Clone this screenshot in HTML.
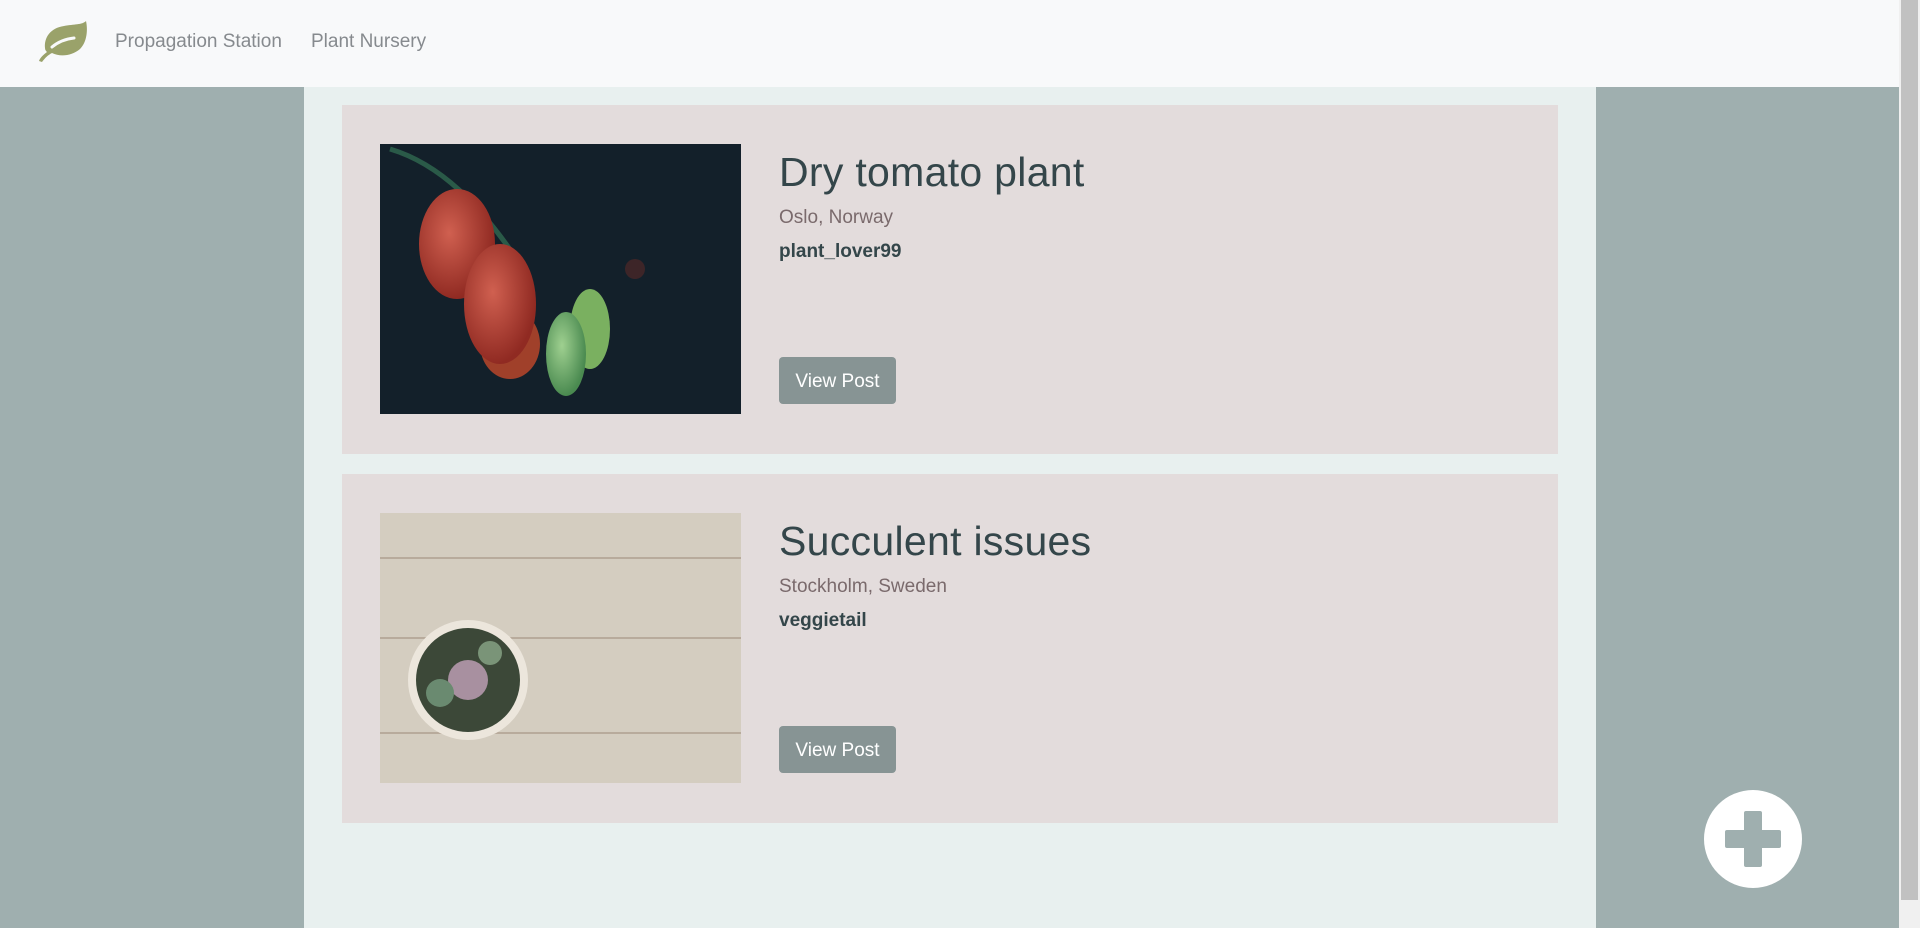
<!DOCTYPE html>
<html><head><style>
*{margin:0;padding:0;box-sizing:border-box}
body{width:1920px;height:928px;overflow:hidden;background:#9fafaf;font-family:"Liberation Sans",sans-serif;position:relative}
.nav{position:absolute;left:0;top:0;width:1899px;height:87px;background:#f8f9fa}
.nav a{position:absolute;top:31px;font-size:19px;color:#868a8e;text-decoration:none}
.main{position:absolute;left:304px;top:87px;width:1292px;height:841px;background:#e8f0ef}
.card{position:absolute;left:38px;width:1216px;height:349px;background:#e3dcdc}
.img{position:absolute;left:38px;top:39px;width:361px;height:270px;overflow:hidden}
.t{position:absolute;left:437px;top:44px;font-size:41px;color:#34464a;letter-spacing:.3px}
.loc{position:absolute;left:437px;top:102px;font-size:19px;color:#7a6a6c}
.u{position:absolute;left:437px;top:136px;font-size:19px;font-weight:bold;color:#34464a}
.btn{position:absolute;left:437px;top:252px;width:117px;height:47px;background:#879494;border-radius:4px;color:#fff;font-size:19px;text-align:center;line-height:49px}
.sb{position:absolute;left:1899px;top:0;width:21px;height:928px;background:#f0f0f0}
.sb div{position:absolute;left:2px;top:0;width:17px;height:900px;background:#c1c1c1}
</style></head><body>
<div class="nav">
<svg style="position:absolute;left:38px;top:20px" width="50" height="42" viewBox="0 0 50 42"><path d="M48 1C44 5 36 4 26 6 12 8 6 18 7 28c0 2 1 3 2 4C5 35 2 38 1 41l3 1c3-4 6-7 10-9 8 4 20 3 28-4C49 22 50 10 48 1z" fill="#9aa26a"/><path d="M14 27c6-5 13-8 22-9" stroke="#f8f9fa" stroke-width="3" fill="none" stroke-linecap="round"/></svg>
<a style="left:115px">Propagation Station</a><a style="left:311px">Plant Nursery</a>
</div>
<div class="main">
<div class="card" style="top:18px">
<div class="img"><svg width="361" height="270"><defs><radialGradient id="r1" cx=".4" cy=".4" r=".6"><stop offset="0" stop-color="#d06050"/><stop offset="1" stop-color="#902a22"/></radialGradient><radialGradient id="g1" cx=".4" cy=".4" r=".6"><stop offset="0" stop-color="#9fd090"/><stop offset="1" stop-color="#4a8a50"/></radialGradient></defs><rect width="361" height="270" fill="#13202a"/><path d="M10 5C60 20 100 60 140 120" stroke="#2a5a48" stroke-width="5" fill="none"/><ellipse cx="77" cy="100" rx="38" ry="55" fill="url(#r1)"/><ellipse cx="130" cy="200" rx="30" ry="35" fill="#a0402a"/><ellipse cx="120" cy="160" rx="36" ry="60" fill="url(#r1)"/><ellipse cx="210" cy="185" rx="20" ry="40" fill="#7ab060"/><ellipse cx="186" cy="210" rx="20" ry="42" fill="url(#g1)"/><circle cx="255" cy="125" r="10" fill="#5a2a28" opacity=".6"/></svg></div>
<div class="t">Dry tomato plant</div><div class="loc">Oslo, Norway</div><div class="u">plant_lover99</div><div class="btn">View Post</div>
</div>
<div class="card" style="top:387px">
<div class="img"><svg width="361" height="270"><rect width="361" height="270" fill="#d8d6ce"/><rect width="361" height="270" fill="#c9a88a" opacity=".2"/><path d="M0 45H361M0 125H361M0 220H361" stroke="#b8ab9c" stroke-width="2"/><circle cx="88" cy="167" r="60" fill="#ece6dc"/><circle cx="88" cy="167" r="52" fill="#3c4838"/><circle cx="88" cy="167" r="20" fill="#a890a0"/><circle cx="60" cy="180" r="14" fill="#6a8a70"/><circle cx="110" cy="140" r="12" fill="#7a9478"/></svg></div>
<div class="t">Succulent issues</div><div class="loc">Stockholm, Sweden</div><div class="u">veggietail</div><div class="btn">View Post</div>
</div>
</div>
<svg style="position:absolute;left:1704px;top:790px" width="98" height="98"><circle cx="49" cy="49" r="49" fill="#fff"/><rect x="21" y="40" width="56" height="18" rx="2" fill="#9fafaf"/><rect x="40" y="21" width="18" height="56" rx="2" fill="#9fafaf"/></svg>
<div class="sb"><div></div></div>
</body></html>
